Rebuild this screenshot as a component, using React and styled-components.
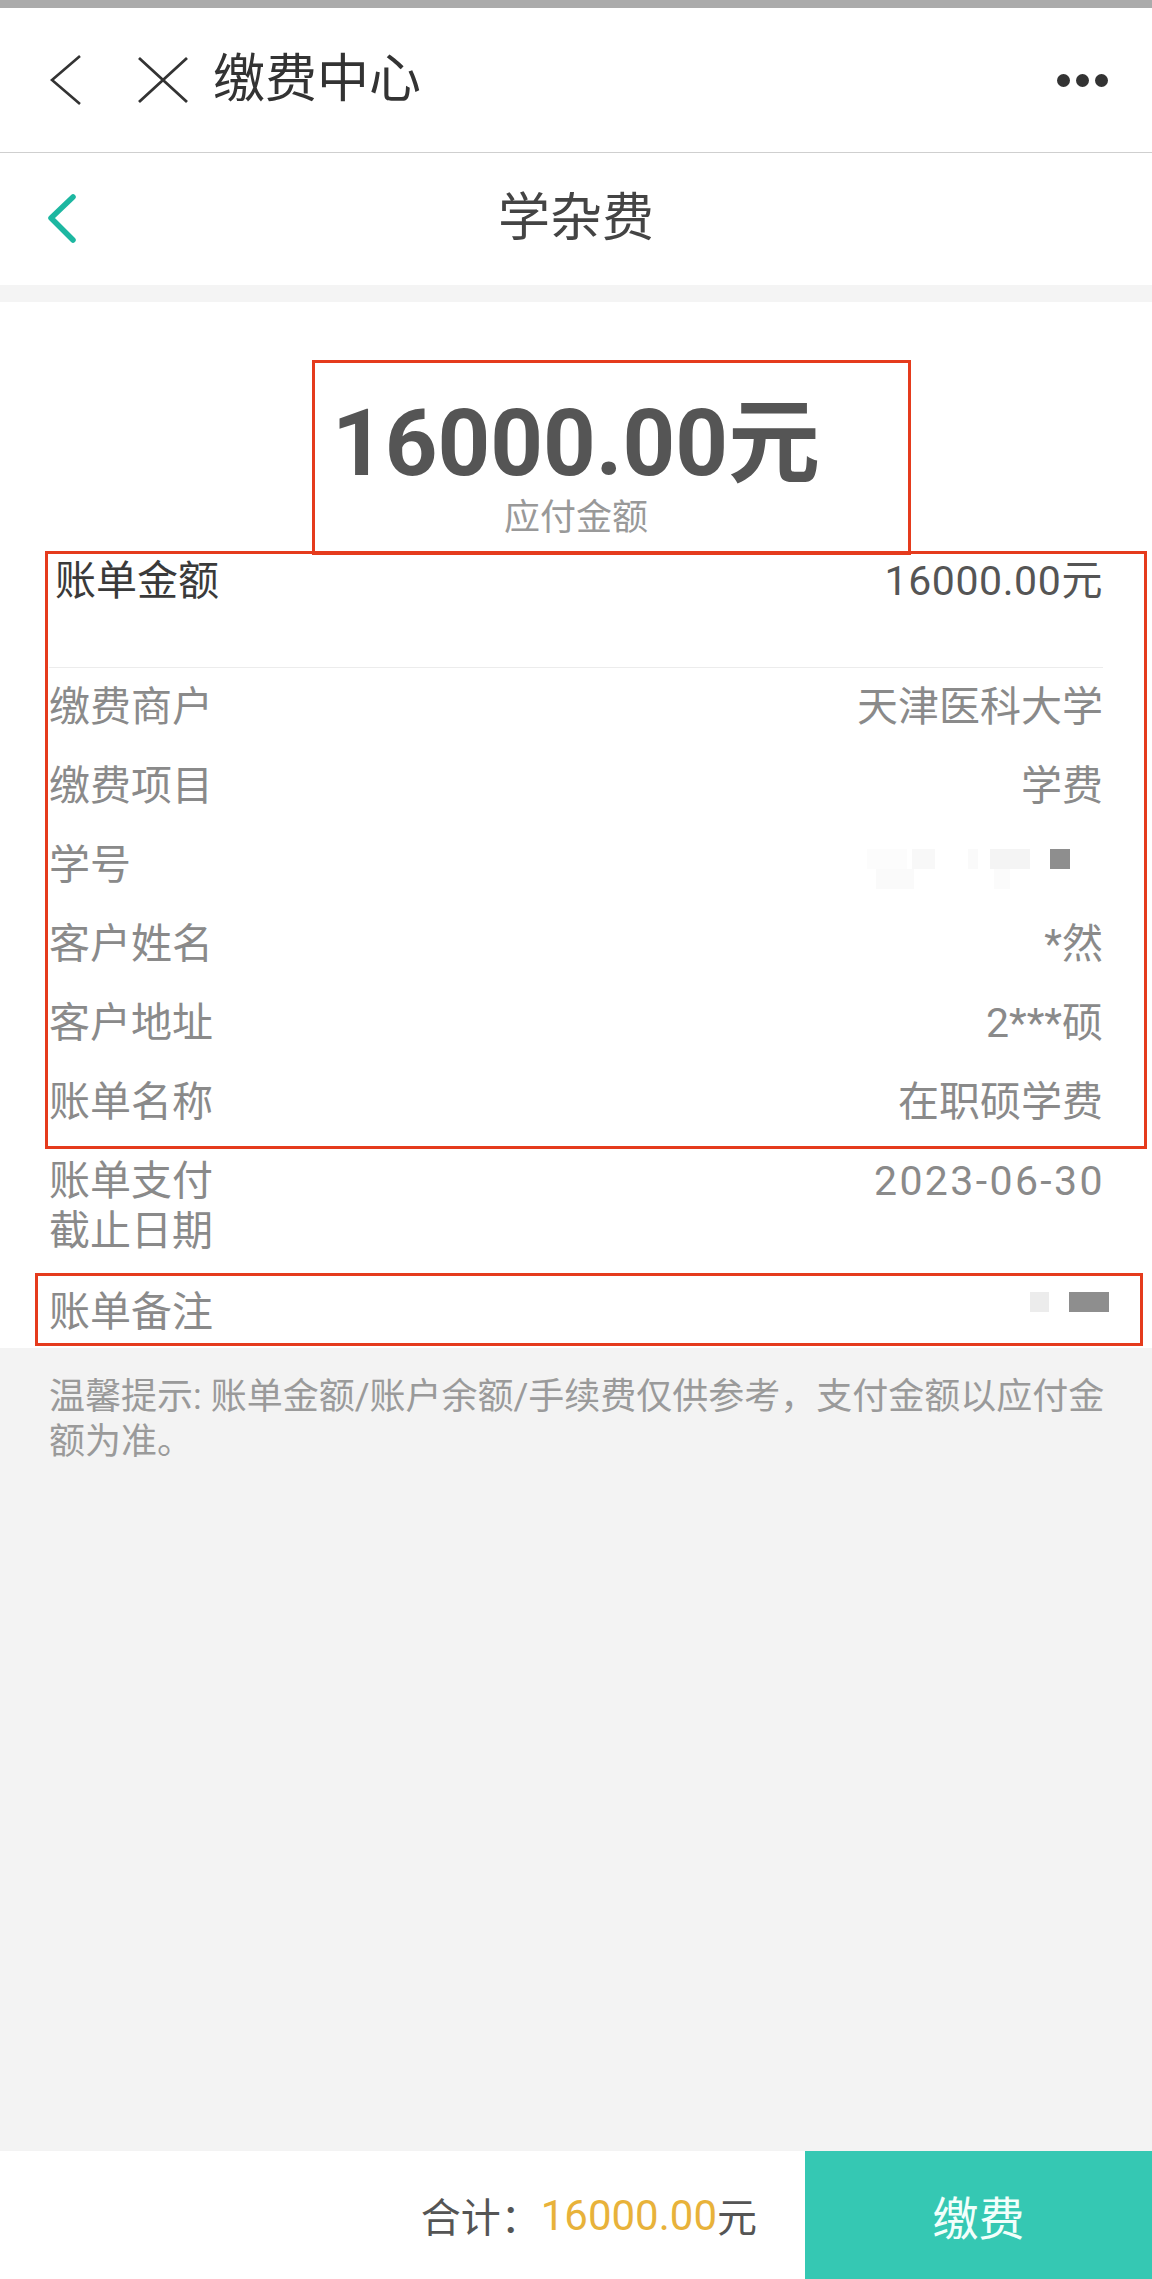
import React from "react"
import styled, { createGlobalStyle } from "styled-components"

const GlobalStyle = createGlobalStyle`
  html, body {
    margin: 0;
    padding: 0;
    background: #fff;
  }
  body {
    font-family: Roboto, "Noto Sans CJK SC", sans-serif;
  }
  * {
    box-sizing: border-box;
  }
`

const Page = styled.div`
  display: flex;
  flex-direction: column;
  width: 1152px;
  min-height: 100vh;
  background: #fff;
`

const StatusStrip = styled.div`
  height: 8px;
  background: #ababab;
`

const TopBar = styled.div`
  display: flex;
  align-items: center;
  height: 145px;
  padding: 0 44px 0 50px;
  border-bottom: 1px solid #cfcfcf;
`

const TopIcon = styled.svg`
  display: block;
  flex-shrink: 0;
  margin-left: ${(p) => p.$gap || 0}px;
`

const TopTitle = styled.div`
  flex: 1;
  margin-left: 24px;
  font-size: 52px;
  line-height: 1;
  color: #333;
`

const MoreDots = styled.div`
  display: flex;
  gap: 6px;
`

const Dot = styled.span`
  width: 13px;
  height: 13px;
  border-radius: 50%;
  background: #333;
`

const SubBar = styled.div`
  display: grid;
  grid-template-columns: 1fr auto 1fr;
  align-items: center;
  height: 132px;
  padding: 0 46px;
`

const SubTitle = styled.div`
  font-size: 52px;
  line-height: 1;
  color: #444;
`

const Band = styled.div`
  height: 17px;
  background: #f4f4f4;
`

const Sheet = styled.section`
  position: relative;
  background: #fff;
`

const Hero = styled.div`
  display: flex;
  flex-direction: column;
  align-items: center;
  padding-top: 92px;
`

const HeroAmount = styled.div`
  font-size: 92px;
  font-weight: 700;
  line-height: 100px;
  color: #555;
`

const HeroLabel = styled.div`
  margin-top: 4px;
  font-size: 36px;
  line-height: 40px;
  color: #999;
`

const Details = styled.div`
  padding: 0 49px;
`

const SummaryRow = styled.div`
  display: flex;
  justify-content: space-between;
  padding: 22px 0 65px 6px;
  line-height: 42px;
`

const SummaryLabel = styled.span`
  font-size: 41px;
  color: #3a3a3a;
`

const SummaryValue = styled.span`
  font-size: 41px;
  letter-spacing: 0.6px;
  color: #555;
`

const Divider = styled.div`
  height: 1px;
  background: #ececec;
`

const InfoRow = styled.div`
  display: flex;
  justify-content: space-between;
  align-items: ${(p) => (p.$top ? "flex-start" : "center")};
  height: ${(p) => p.$h || 79}px;
  padding: ${(p) => (p.$top ? "14px 0 21px" : "0")};
  font-size: 41px;
  line-height: ${(p) => (p.$top ? "50px" : "1")};
  color: #8a8a8a;
`

const Label = styled.span`
  white-space: pre-line;
`

const Value = styled.span`
  text-align: right;
  letter-spacing: ${(p) => (p.$wide ? "2.4px" : "0")};
  margin-right: ${(p) => (p.$wide ? "-2px" : "0")};
`

const Mosaic = styled.div`
  display: flex;
  flex-direction: column;
  margin-right: ${(p) => p.$shift || 0}px;
  margin-top: ${(p) => p.$lift || 0}px;
`

const MosaicLine = styled.div`
  display: flex;
  justify-content: flex-end;
  height: 20px;
`

const Cell = styled.span`
  display: block;
  height: 100%;
`

const Mark = styled.div`
  position: absolute;
  top: ${(p) => p.$top}px;
  left: ${(p) => p.$left}px;
  width: ${(p) => p.$w}px;
  height: ${(p) => p.$h}px;
  border: 3px solid #e53b1d;
  pointer-events: none;
`

const Tips = styled.div`
  flex: 1;
  padding: 27px 44px 0 49px;
  background: #f3f3f3;
  font-size: 36px;
  line-height: 45px;
  color: #9a9a9a;
`

const Footer = styled.div`
  display: flex;
  height: 128px;
  background: #fff;
`

const Total = styled.div`
  flex: 1;
  display: flex;
  justify-content: flex-end;
  align-items: center;
  padding-right: 48px;
  font-size: 40px;
  color: #555;
`

const TotalAmount = styled.span`
  font-size: 42px;
  color: #e8b23a;
`

const PayButton = styled.button`
  width: 347px;
  border: none;
  background: #35c8b3;
  color: #f2fffb;
  font-family: inherit;
  font-size: 46px;
  cursor: pointer;
`

const studentCells = [
  [
    [40, "#fcfcfc"],
    [5, "transparent"],
    [23, "#f8f8f8"],
    [33, "transparent"],
    [10, "#fafafa"],
    [12, "transparent"],
    [40, "#f4f4f4"],
    [20, "transparent"],
    [20, "#8e8e8e"],
    [33, "transparent"],
  ],
  [
    [38, "#fafafa"],
    [80, "transparent"],
    [16, "#fbfbfb"],
    [93, "transparent"],
  ],
]

const remarkCells = [
  [
    [19, "#ececec"],
    [20, "transparent"],
    [40, "#8e8e8e"],
  ],
]

const rows = [
  ["缴费商户", "天津医科大学"],
  ["缴费项目", "学费"],
  ["学号", null],
  ["客户姓名", "*然"],
  ["客户地址", "2***硕"],
  ["账单名称", "在职硕学费"],
]

function MosaicBlock({ lines, shift, lift }) {
  return (
    <Mosaic $shift={shift} $lift={lift}>
      {lines.map((line, i) => (
        <MosaicLine key={i}>
          {line.map(([w, c], j) => (
            <Cell key={j} style={{ width: w, background: c }} />
          ))}
        </MosaicLine>
      ))}
    </Mosaic>
  )
}

export default function App() {
  return (
    <Page>
      <GlobalStyle />
      <StatusStrip />

      <TopBar>
        <TopIcon width="32" height="52" viewBox="0 0 32 52">
          <path d="M30 2 L2 26 L30 50" fill="none" stroke="#333" strokeWidth="2.6" />
        </TopIcon>
        <TopIcon $gap={55} width="52" height="48" viewBox="0 0 52 48">
          <path d="M2 2 L50 46 M50 2 L2 46" fill="none" stroke="#333" strokeWidth="2.8" />
        </TopIcon>
        <TopTitle>缴费中心</TopTitle>
        <MoreDots>
          <Dot />
          <Dot />
          <Dot />
        </MoreDots>
      </TopBar>

      <SubBar>
        <TopIcon width="32" height="52" viewBox="0 0 32 52">
          <path
            d="M27 4 L5 25 L27 47"
            fill="none"
            stroke="#1db7a1"
            strokeWidth="5.5"
            strokeLinecap="round"
            strokeLinejoin="round"
          />
        </TopIcon>
        <SubTitle>学杂费</SubTitle>
        <span />
      </SubBar>

      <Band />

      <Sheet>
        <Hero>
          <HeroAmount>16000.00元</HeroAmount>
          <HeroLabel>应付金额</HeroLabel>
        </Hero>

        <Details>
          <SummaryRow>
            <SummaryLabel>账单金额</SummaryLabel>
            <SummaryValue>16000.00元</SummaryValue>
          </SummaryRow>
          <Divider />

          {rows.map(([label, value]) => (
            <InfoRow key={label}>
              <Label>{label}</Label>
              {value ? <Value>{value}</Value> : <MosaicBlock lines={studentCells} lift={6} />}
            </InfoRow>
          ))}

          <InfoRow $top $h={135}>
            <Label>{"账单支付\n截止日期"}</Label>
            <Value $wide>2023-06-30</Value>
          </InfoRow>

          <InfoRow $h={71}>
            <Label>账单备注</Label>
            <MosaicBlock lines={remarkCells} shift={-6} lift={-22} />
          </InfoRow>
        </Details>

        <Mark $top={58} $left={312} $w={599} $h={195} />
        <Mark $top={249} $left={45} $w={1102} $h={598} />
        <Mark $top={971} $left={35} $w={1108} $h={73} />
      </Sheet>

      <Tips>温馨提示: 账单金额/账户余额/手续费仅供参考，支付金额以应付金额为准。</Tips>

      <Footer>
        <Total>
          合计：<TotalAmount>16000.00</TotalAmount>元
        </Total>
        <PayButton>缴费</PayButton>
      </Footer>
    </Page>
  )
}
